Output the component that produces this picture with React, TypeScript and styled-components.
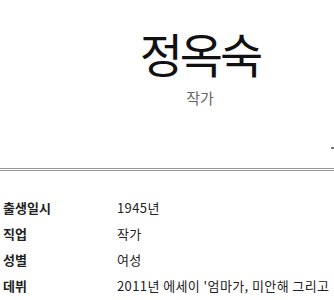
import React from 'react';
import styled, { createGlobalStyle } from 'styled-components';

const GlobalStyle = createGlobalStyle`
  html, body {
    margin: 0;
    padding: 0;
    overflow: hidden;
    background: #fff;
  }
  body {
    font-family: "Noto Sans CJK KR", "Noto Sans", sans-serif;
  }
  * {
    box-sizing: border-box;
  }
`;

const Page = styled.div`
  width: 334px;
`;

const Header = styled.header`
  position: relative;
  height: 171px;
  padding-left: 66px;
  border-bottom: 3px double #999;
  display: flex;
  flex-direction: column;
  align-items: center;
`;

const Name = styled.h1`
  margin: 21px 0 0;
  font-size: 47px;
  font-weight: 400;
  line-height: 64px;
  color: #111;
  letter-spacing: -3px;
`;

const Role = styled.p`
  margin: 3px 0 0;
  font-size: 15px;
  line-height: 20px;
  color: #666;
`;

const Marker = styled.span`
  position: absolute;
  right: 0;
  top: 147px;
  width: 3px;
  height: 2px;
  background: #777;
`;

const InfoTable = styled.dl`
  margin: 0;
  padding: 27px 0 0 3px;
  display: grid;
  grid-template-columns: 114px 1fr;
  grid-auto-rows: 26px;
  white-space: nowrap;
`;

const Label = styled.dt`
  margin: 0;
  font-size: 13px;
  font-weight: 700;
  color: #222;
  line-height: 20px;
`;

const Value = styled.dd`
  margin: 0;
  font-size: 13px;
  color: #222;
  line-height: 20px;
  letter-spacing: 0.4px;
  overflow: hidden;
`;

const rows: [string, string][] = [
  ['출생일시', '1945년'],
  ['직업', '작가'],
  ['성별', '여성'],
  ['데뷔', "2011년 에세이 '엄마가, 미안해 그리고"],
];

const App: React.FC = () => (
  <Page>
    <GlobalStyle />
    <Header>
      <Name>정옥숙</Name>
      <Role>작가</Role>
      <Marker />
    </Header>
    <InfoTable>
      {rows.map(([k, v]) => (
        <React.Fragment key={k}>
          <Label>{k}</Label>
          <Value>{v}</Value>
        </React.Fragment>
      ))}
    </InfoTable>
  </Page>
);

export default App;
